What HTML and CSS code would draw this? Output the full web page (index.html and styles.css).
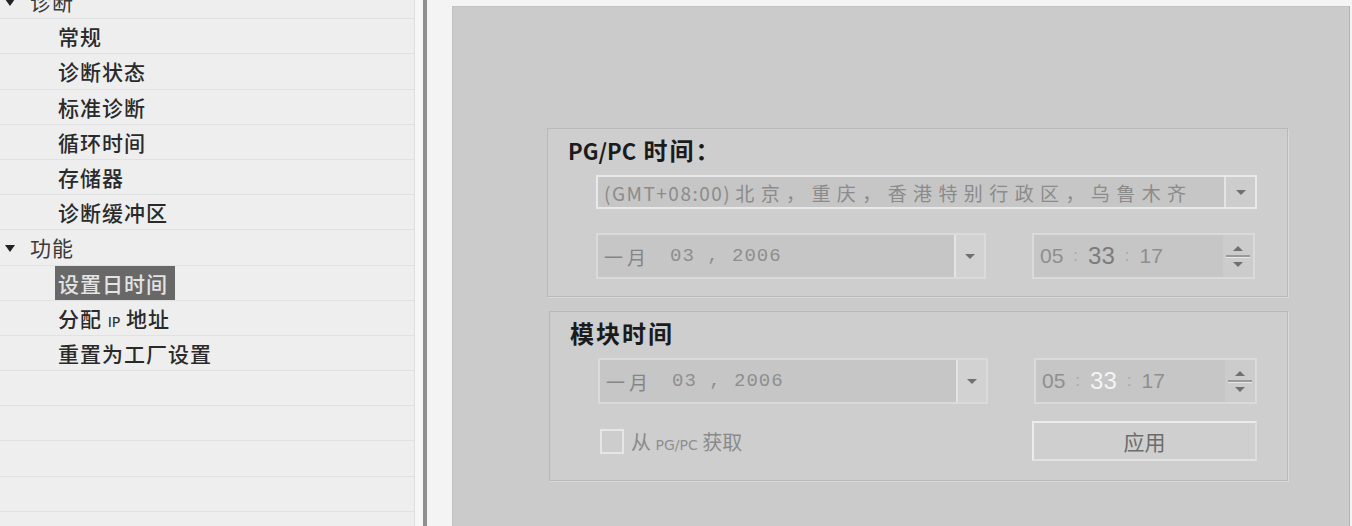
FILE: index.html
```html
<!DOCTYPE html>
<html lang="zh-CN">
<head>
    <meta charset="UTF-8">
    <title>设置日时间</title>
    <link rel="stylesheet" href="styles.css">
</head>
<body>
    <div class="tree">
        <ul class="tree-list">
            <li class="row level1"><span class="arrow"></span><span>诊断</span></li>
            <li class="row level2"><span>常规</span></li>
            <li class="row level2"><span>诊断状态</span></li>
            <li class="row level2"><span>标准诊断</span></li>
            <li class="row level2"><span>循环时间</span></li>
            <li class="row level2"><span>存储器</span></li>
            <li class="row level2"><span>诊断缓冲区</span></li>
            <li class="row level1"><span class="arrow"></span><span>功能</span></li>
            <li class="row level2"><span class="selected">设置日时间</span></li>
            <li class="row level2"><span>分配 <span class="small">IP</span> 地址</span></li>
            <li class="row level2"><span>重置为工厂设置</span></li>
            <li class="row"></li>
            <li class="row"></li>
            <li class="row"></li>
            <li class="row"></li>
            <li class="row"></li>
        </ul>
    </div>
    <div class="splitter"></div>

    <div class="main">
        <div class="pane">
            <div class="group group-pc">
                <div class="group-title"><span class="latin">PG/PC</span> 时间：</div>
                <div class="field combo tz">
                    <div class="value"><span class="latin-sm">(GMT+08:00)</span> <span class="cjk-wide">北京，重庆，香港特别行政区，乌鲁木齐</span></div>
                    <div class="drop"><span class="tri-down"></span></div>
                </div>
                <div class="field-row">
                    <div class="field combo date">
                        <div class="value"><span class="month">一月</span><span class="mono">03 , 2006</span></div>
                        <div class="drop"><span class="tri-down"></span></div>
                    </div>
                    <div class="field spin">
                        <div class="value time">05<span class="sep">:</span><span class="mid">33</span><span class="sep">:</span>17</div>
                        <div class="spin-btns">
                            <span class="tri-up"></span>
                            <span class="spin-line"></span>
                            <span class="tri-down"></span>
                        </div>
                    </div>
                </div>
            </div>

            <div class="group group-module">
                <div class="group-title">模块时间</div>
                <div class="field-row first">
                    <div class="field combo date">
                        <div class="value"><span class="month">一月</span><span class="mono">03 , 2006</span></div>
                        <div class="drop"><span class="tri-down"></span></div>
                    </div>
                    <div class="field spin">
                        <div class="value time">05<span class="sep">:</span><span class="mid active">33</span><span class="sep">:</span>17</div>
                        <div class="spin-btns">
                            <span class="tri-up"></span>
                            <span class="spin-line"></span>
                            <span class="tri-down"></span>
                        </div>
                    </div>
                </div>
                <div class="field-row bottom">
                    <label class="check">
                        <span class="box"></span>
                        <span>从 <span class="small">PG/PC</span> 获取</span>
                    </label>
                    <button class="apply">应用</button>
                </div>
            </div>
        </div>
    </div>
</body>
</html>
```
FILE: styles.css
```css
body {
    margin: 0;
    padding: 0;
    height: 526px;
    overflow: hidden;
    display: flex;
    font-family: "Noto Sans CJK SC", "Noto Sans", sans-serif;
    background-color: #f2f2f2;
}

/* left navigation tree */
.tree {
    width: 414px;
    background-color: #eeeeee;
    border-right: 1px solid #dedede;
    overflow: hidden;
}
.tree-list {
    list-style: none;
    margin: -16px 0 0 0;
    padding: 0;
}
.row {
    height: 35.2px;
    box-sizing: border-box;
    border-bottom: 1px solid #e1e1e1;
    display: flex;
    align-items: center;
    font-size: 21px;
    font-weight: 500;
    letter-spacing: 1px;
    color: #2a2a2a;
    white-space: nowrap;
}
.level1 {
    padding-left: 5px;
    color: #3a3a3a;
    font-weight: normal;
}
.level2 {
    padding-left: 58px;
}
.arrow {
    width: 0;
    height: 0;
    border-left: 5px solid transparent;
    border-right: 5px solid transparent;
    border-top: 7px solid #222;
    margin-right: 15px;
    margin-top: 2px;
}
.small {
    font-family: "DejaVu Sans", sans-serif;
    font-size: 14px;
    letter-spacing: 0;
}
.selected {
    background-color: #686868;
    color: #e4e4e4;
    padding: 2px 7px 2px 3px;
    margin-left: -3px;
}

.splitter {
    width: 8px;
    background-color: #f6f6f6;
    border-right: 4px solid #8f8f8f;
}

/* right content */
.main {
    flex: 1;
    padding: 6px 2px 0 25px;
    background-color: #f4f4f4;
}
.pane {
    height: 100%;
    box-sizing: border-box;
    background-color: #cbcbcb;
    border-top: 1px solid #c2c2c2;
    border-left: 1px solid #c2c2c2;
    border-right: 1px solid #b2b2b2;
    padding: 121px 0 0 94px;
}
.group {
    width: 741px;
    box-sizing: border-box;
    background-color: #cecece;
    border: 1px solid #b9b9b9;
    box-shadow: 1px 1px 0 #d9d9d9;
    padding: 6px 30px 0 20px;
}
.group-pc {
    height: 169px;
}
.group-module {
    height: 170px;
    margin-top: 14px;
    margin-left: 2px;
    width: 739px;
}
.group-title {
    font-size: 24px;
    font-weight: bold;
    letter-spacing: 2px;
    line-height: 30px;
    color: #1b1b1b;
}
.group-title .latin {
    font-size: 22px;
    letter-spacing: 0;
}

.field {
    display: flex;
    box-sizing: border-box;
    background-color: #c6c6c6;
    border: 2px solid #dadada;
    color: #8b8b8b;
}
.field .value {
    flex: 1;
    display: flex;
    align-items: center;
    padding-left: 6px;
    white-space: nowrap;
}
.tz {
    margin: 10px 0 0 28px;
    width: 661px;
    height: 34px;
    border-color: #e9e9e9;
    font-size: 19px;
}
.latin-sm {
    letter-spacing: 1.5px;
    margin-right: 4px;
}
.cjk-wide {
    letter-spacing: 6.4px;
}
.drop {
    width: 28px;
    display: flex;
    align-items: center;
    justify-content: center;
    background-color: #d2d2d2;
    border-left: 2px solid #e4e4e4;
}
.tz .drop {
    width: 29px;
    background-color: #cdcdcd;
}
.tri-down {
    width: 0;
    height: 0;
    border-left: 5px solid transparent;
    border-right: 5px solid transparent;
    border-top: 5px solid #707070;
}
.tri-up {
    width: 0;
    height: 0;
    border-left: 5px solid transparent;
    border-right: 5px solid transparent;
    border-bottom: 5px solid #707070;
}

.field-row {
    display: flex;
    align-items: center;
    gap: 46px;
    margin: 24px 0 0 28px;
}
.group-module .field-row.first {
    margin-top: 10px;
}
.date {
    width: 390px;
    height: 46px;
    font-size: 19px;
}
.month {
    letter-spacing: 4px;
    margin-right: 20px;
    color: #858585;
}
.mono {
    font-family: "Liberation Mono", monospace;
    font-size: 19px;
    letter-spacing: 1px;
    color: #8e8e8e;
}
.spin {
    width: 223px;
    height: 46px;
}
.time {
    font-family: "Liberation Sans", Arial, sans-serif;
    font-size: 21px;
    color: #8f8f8f;
    padding-left: 8px;
}
.time .sep {
    margin: 0 10px;
    font-size: 17px;
    color: #a6a6a6;
}
.time .mid {
    font-size: 24px;
    color: #7c7c7c;
}
.time .mid.active {
    color: #f4f4f4;
}
.spin-btns {
    width: 30px;
    display: flex;
    flex-direction: column;
    align-items: center;
    justify-content: center;
    gap: 4px;
    background-color: #cccccc;
}
.spin-line {
    width: 24px;
    height: 2px;
    background-color: #9a9a9a;
    border-bottom: 1px solid #e8e8e8;
}

.field-row.bottom {
    margin-top: 17px;
    justify-content: space-between;
    width: 660px;
}
.check {
    display: flex;
    align-items: center;
    gap: 7px;
    font-size: 20px;
    color: #8a8a8a;
    margin-left: 2px;
}
.check .small {
    font-size: 14px;
    color: #8f8f8f;
}
.box {
    width: 20px;
    height: 21px;
    border: 2px solid #e6e6e6;
    background-color: #cdcdcd;
}
.apply {
    width: 225px;
    height: 40px;
    font-family: "Noto Sans CJK SC", sans-serif;
    font-size: 21px;
    color: #6c6c6c;
    background-color: #cfcfcf;
    border: 2px solid #ececec;
    border-right-color: #dcdcdc;
    border-bottom-color: #e2e2e2;
    padding: 0;
    margin-right: 1px;
}
```
